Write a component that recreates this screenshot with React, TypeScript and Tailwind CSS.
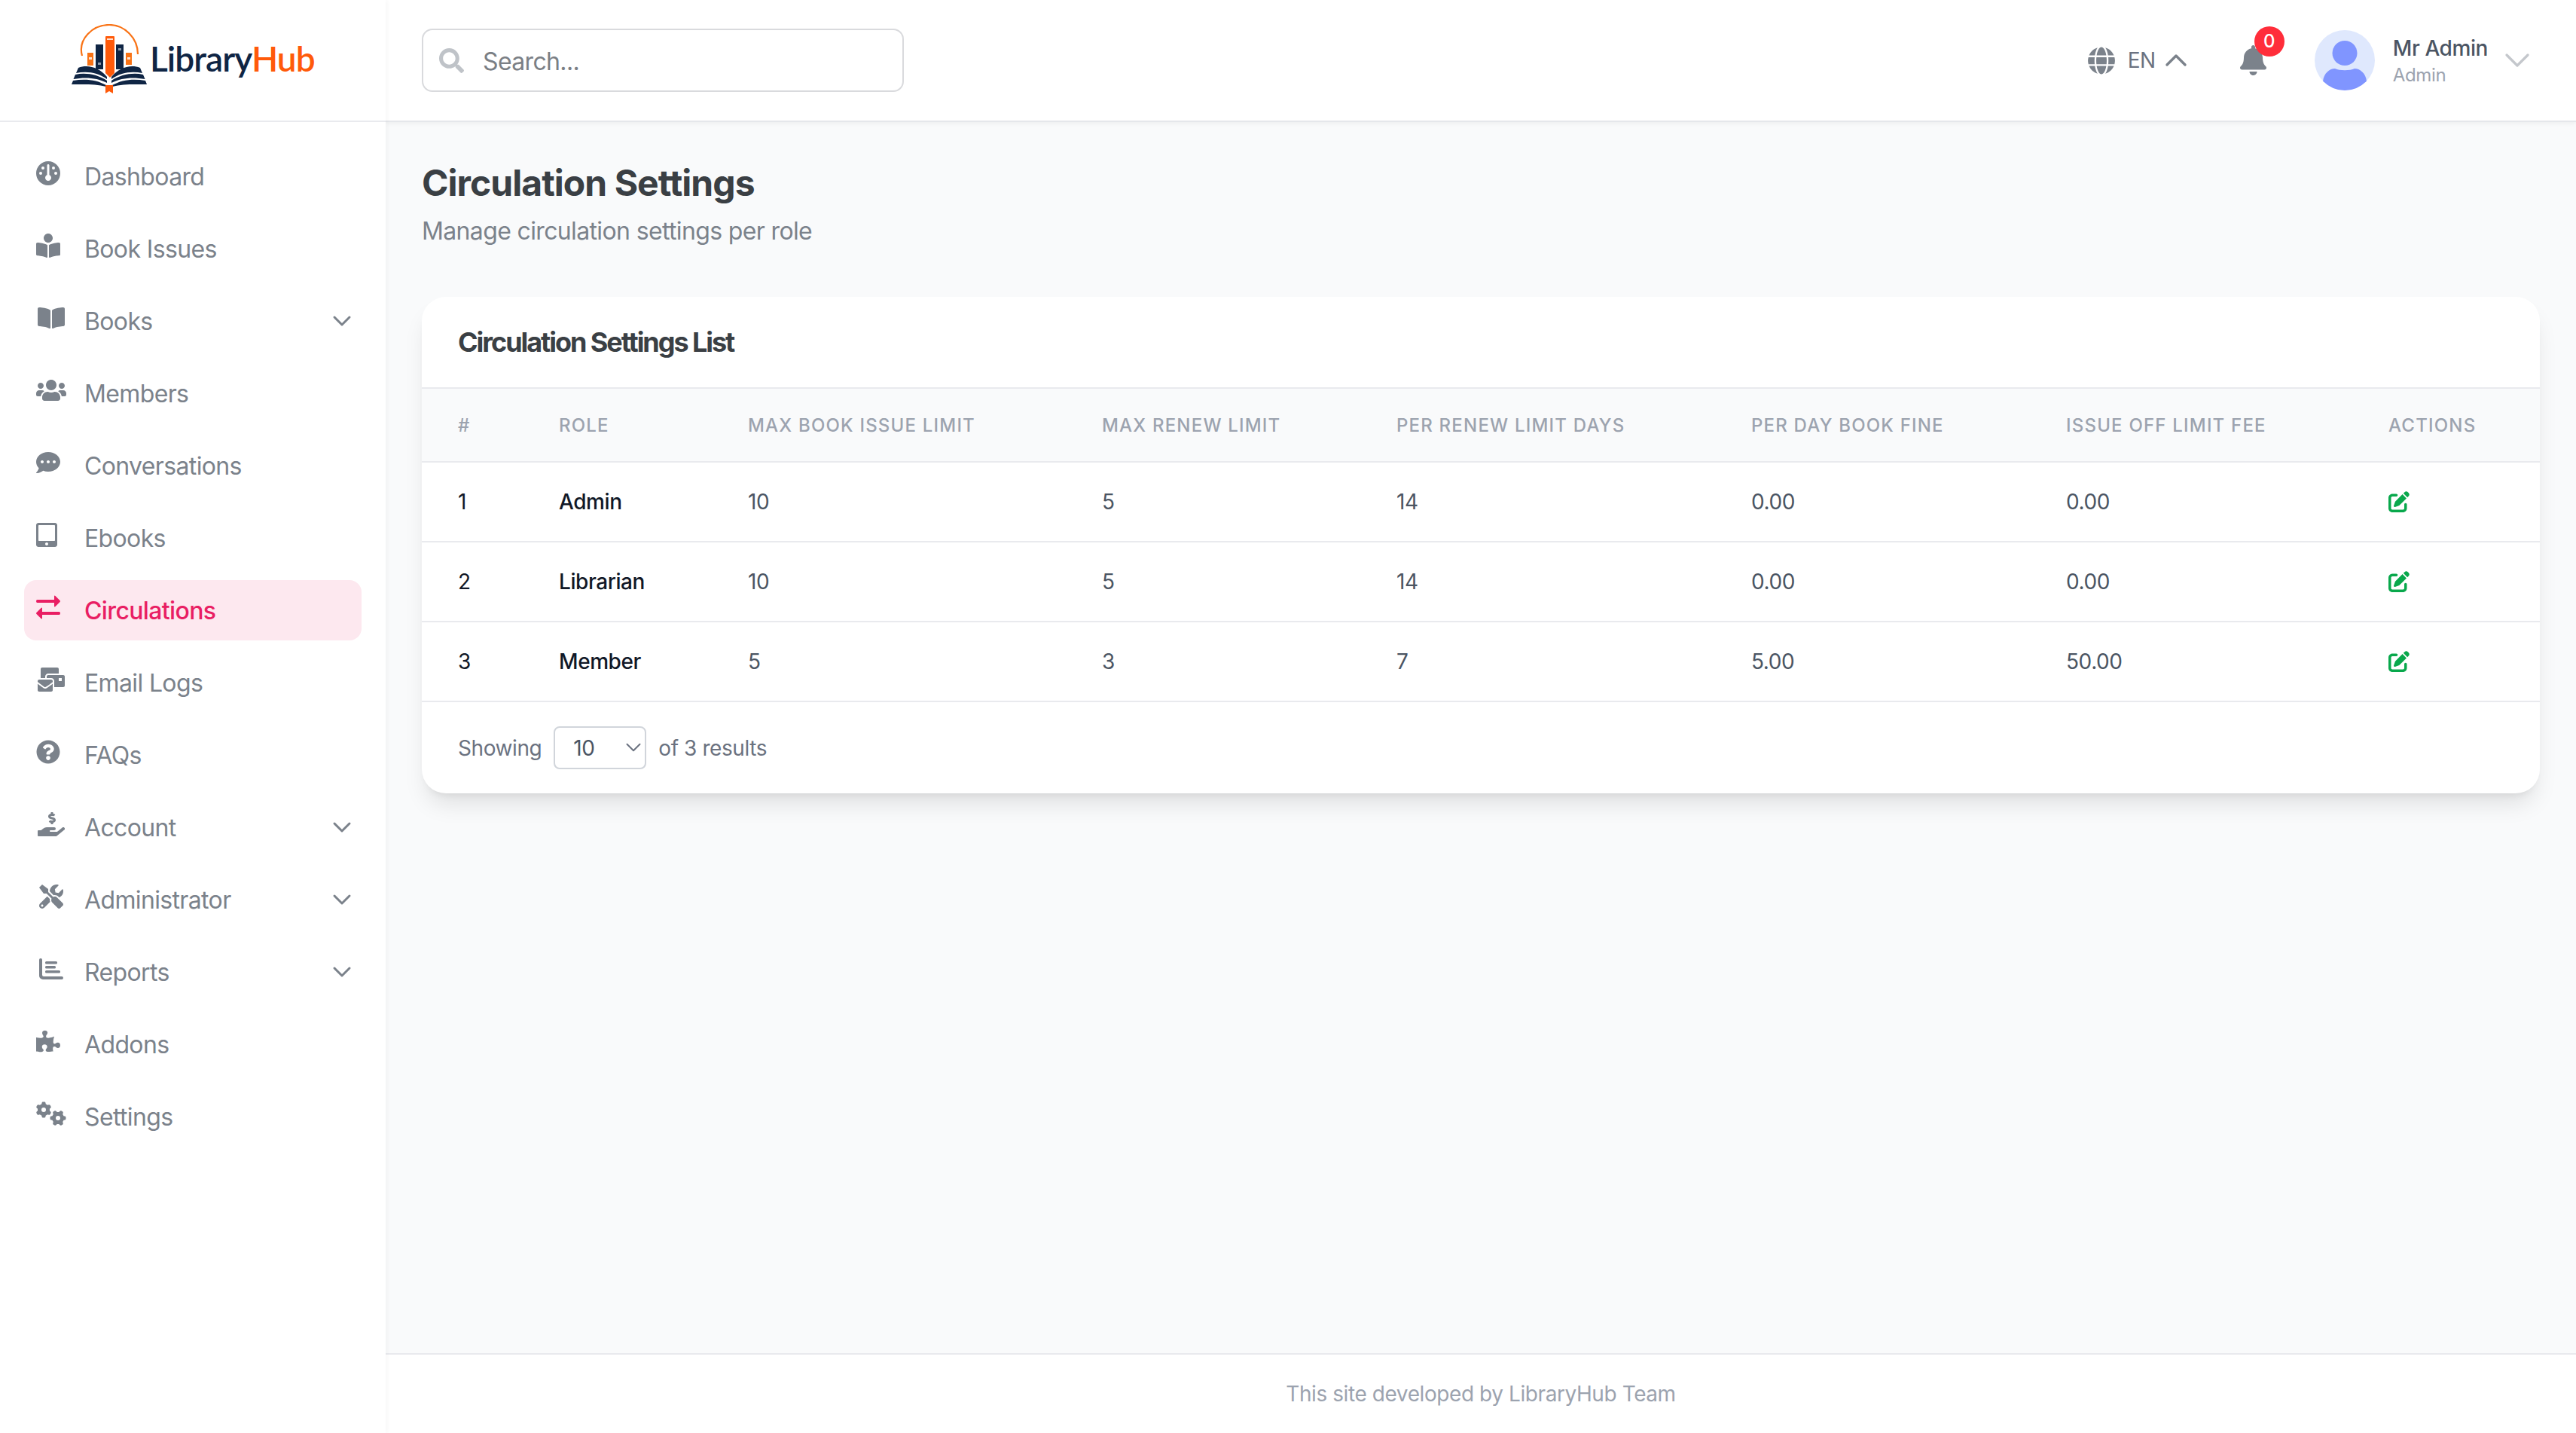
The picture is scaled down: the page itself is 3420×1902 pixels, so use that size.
import type { ReactNode } from "react";
import { ChevronDown, ChevronUp } from "lucide-react";
import {
  FaBell,
  FaBookOpen,
  FaBookReader,
  FaCommentDots,
  FaGlobe,
  FaHandHoldingUsd,
  FaMailBulk,
  FaPuzzlePiece,
  FaQuestionCircle,
  FaSearch,
  FaTabletAlt,
  FaTools,
  FaUsers,
} from "react-icons/fa";
import { FaGauge, FaGears, FaPenToSquare } from "react-icons/fa6";

interface NavItem {
  label: string;
  icon: ReactNode;
  active?: boolean;
  hasChildren?: boolean;
}

function ReportsIcon() {
  return (
    <svg viewBox="0 0 32 28" fill="currentColor" className="ml-1 h-7 w-8">
      <path d="M0 2a2 2 0 0 1 4 0v20a2 2 0 0 0 2 2h24a2 2 0 0 1 0 4H5a5 5 0 0 1-5-5Z" />
      <rect x="8" y="4" width="16" height="3.5" rx="1.5" />
      <rect x="8" y="10" width="14" height="3.5" rx="1.5" />
      <rect x="8" y="16" width="20" height="3.5" rx="1.5" />
    </svg>
  );
}

function SwapIcon() {
  return (
    <svg viewBox="0 0 32 32" fill="currentColor" className="h-8 w-8">
      <path d="M1.5 6H24V1.5Q24 0 25.5 1L31.5 7Q32.5 8 31.5 9L25.5 15Q24 16 24 14.5V10H1.5Q0 10 0 8T1.5 6Z" />
      <path d="M30.5 22H8V17.500Q8 16 6.500 17L.5 23Q-.5 24 .5 25L6.500 31Q8 32 8 30.500V26H30.500Q32 26 32 24T30.500 22Z" />
    </svg>
  );
}

const navItems: NavItem[] = [
  { label: "Dashboard", icon: <FaGauge className="h-8 w-8" /> },
  { label: "Book Issues", icon: <FaBookReader className="h-8 w-8" /> },
  { label: "Books", icon: <FaBookOpen className="ml-[2px] h-8 w-9" />, hasChildren: true },
  { label: "Members", icon: <FaUsers className="h-8 w-10" /> },
  { label: "Conversations", icon: <FaCommentDots className="h-8 w-8" /> },
  { label: "Ebooks", icon: <FaTabletAlt className="h-8 w-7" /> },
  { label: "Circulations", icon: <SwapIcon />, active: true },
  { label: "Email Logs", icon: <FaMailBulk className="ml-[2px] h-8 w-9" /> },
  { label: "FAQs", icon: <FaQuestionCircle className="h-8 w-8" /> },
  { label: "Account", icon: <FaHandHoldingUsd className="ml-[2px] h-8 w-9" />, hasChildren: true },
  { label: "Administrator", icon: <FaTools className="ml-1 h-8 w-8" />, hasChildren: true },
  { label: "Reports", icon: <ReportsIcon />, hasChildren: true },
  { label: "Addons", icon: <FaPuzzlePiece className="h-8 w-8" /> },
  { label: "Settings", icon: <FaGears className="h-8 w-10" /> },
];

const rows = [
  { id: 1, role: "Admin", issue: "10", renew: "5", days: "14", fine: "0.00", fee: "0.00" },
  { id: 2, role: "Librarian", issue: "10", renew: "5", days: "14", fine: "0.00", fee: "0.00" },
  { id: 3, role: "Member", issue: "5", renew: "3", days: "7", fine: "5.00", fee: "50.00" },
];

const thClass =
  "h-[98px] border-b-2 border-[#e9eaee] pt-[1px] pl-12 text-left text-[24px] font-medium uppercase tracking-[0.05em] text-[#9ca3af]";
const tdClass = "h-[106px] border-b-2 border-[#e9eaee] pl-12 text-[28px] tracking-[-0.015em] text-[#4b5563]";

function Logo() {
  return (
    <div className="flex items-center">
      <svg width="100" height="92" viewBox="0 0 100 92" className="shrink-0">
        <path d="M14 42C8 20 28 1 50 1C70 1 88 18 88 40" fill="none" stroke="#f97316" strokeWidth="2.2" />
        <rect x="21" y="38" width="8" height="17" fill="#f97316" />
        <rect x="72" y="38" width="8" height="16" fill="#f97316" />
        <rect x="32" y="27" width="10" height="33" fill="#0f2544" />
        <rect x="59" y="27" width="10" height="33" fill="#0f2544" />
        <path d="M45 17Q45 16 46 16H56Q57 16 57 17V65L51 71L45 65Z" fill="#ff5a0a" />
        <rect x="47" y="19" width="8" height="2" fill="#fde3d3" />
        <rect x="35" y="51" width="4" height="3" fill="#8a97a8" />
        <rect x="62" y="32" width="4" height="3" fill="#8a97a8" />
        <rect x="23" y="44" width="4" height="3" fill="#fde3d3" />
        <rect x="74" y="44" width="4" height="3" fill="#fde3d3" />
        <g fill="#0f2544">
          <path d="M9 58C22 53 37 58 47 70V73C35 64 20 62 6 65Z" />
          <path d="M5 67C19 64 35 67 47 75V78C34 71 18 70 2.5 73Z" />
          <path d="M2 75C18 72 34 74 46 81V83C32 79 14 80 0 80Z" />
        </g>
        <g fill="#0f2544" transform="matrix(-1 0 0 1 100 0)">
          <path d="M9 58C22 53 37 58 47 70V73C35 64 20 62 6 65Z" />
          <path d="M5 67C19 64 35 67 47 75V78C34 71 18 70 2.5 73Z" />
          <path d="M2 75C18 72 34 74 46 81V83C32 79 14 80 0 80Z" />
        </g>
        <path d="M45 81H55V92L50 89L45 92Z" fill="#ff5a0a" />
      </svg>
      <span className="ml-[4px] text-[46px] leading-none font-semibold tracking-[-0.02em] font-['Lato',sans-serif]">
        <span className="text-[#0f2544]">Library</span>
        <span className="text-[#ff5a0a]">Hub</span>
      </span>
    </div>
  );
}

function Sidebar() {
  return (
    <aside className="z-20 flex w-[512px] shrink-0 flex-col bg-white shadow-[2px_0_6px_rgba(0,0,0,0.04)]">
      <div className="flex h-[162px] items-center border-b-2 border-[#e9eaee] pb-[4px] pl-[95px]">
        <Logo />
      </div>
      <nav className="flex flex-col gap-4 px-8 pt-8">
        {navItems.map((item) => (
          <a
            key={item.label}
            className={`flex h-20 items-center rounded-2xl pr-[6px] pl-4 text-[32px] tracking-[-0.02em] ${
              item.active ? "bg-[#fde8ef] font-medium text-[#e91e63]" : "text-[#7b828b]"
            }`}
          >
            <span className="flex w-[64px] shrink-0 -translate-y-1">{item.icon}</span>
            <span className="flex-1 pt-[2px]">{item.label}</span>
            {item.hasChildren && <ChevronDown size={40} strokeWidth={1.8} />}
          </a>
        ))}
      </nav>
    </aside>
  );
}

function Avatar() {
  return (
    <div className="ml-16 size-20 shrink-0 overflow-hidden rounded-full bg-[#dfe8fd]">
      <svg width="80" height="80" viewBox="0 0 80 80">
        <circle cx="40" cy="30.5" r="16.5" fill="#8095ff" />
        <path d="M11 80V68C12 57 20 51 27 51C33 54 47 54 53 51C60 51 68 57 69 68V80Z" fill="#8095ff" />
      </svg>
    </div>
  );
}

function Topbar() {
  return (
    <header className="z-10 flex h-[162px] shrink-0 items-center justify-between border-b-2 border-[#e5e7eb] bg-white pr-[50px] pl-12 shadow-[0_2px_6px_rgba(0,0,0,0.05)]">
      <label className="flex h-[84px] w-[640px] items-center rounded-[14px] border-2 border-[#d9dadd] pl-[21px]">
        <FaSearch size={33} className="shrink-0 text-[#bfc3c8]" />
        <input
          placeholder="Search..."
          className="ml-[25px] w-full pt-[3px] text-[32px] tracking-[-0.02em] text-[#374151] outline-none placeholder:text-[#7b7f85]"
        />
      </label>
      <div className="flex items-center">
        <FaGlobe className="h-[37px] w-9 text-[#7b828b]" />
        <span className="ml-[17px] text-[28px] tracking-[-0.015em] text-[#6b7280]">EN</span>
        <ChevronUp size={48} strokeWidth={1.7} className="ml-[3px] text-[#7b828b]" />
        <div className="relative ml-[61px]">
          <FaBell className="h-10 w-[35px] text-[#7b828b]" />
          <span className="absolute top-[-25px] left-[19px] flex size-10 items-center justify-center rounded-full bg-[#ff2d3a] text-[24px] font-medium text-white">
            0
          </span>
        </div>
        <Avatar />
        <div className="ml-6 flex flex-col pt-[2px]">
          <span className="text-[28px] leading-[36px] font-medium tracking-[-0.015em] text-[#4b5563]">Mr Admin</span>
          <span className="mt-[2px] text-[24px] leading-[32px] tracking-[-0.015em] text-[#9ca3af]">Admin</span>
        </div>
        <ChevronDown size={56} strokeWidth={1.4} className="ml-[11px] text-[#c4c7cc]" />
      </div>
    </header>
  );
}

function SettingsTable() {
  return (
    <table className="w-full table-fixed border-separate border-spacing-0">
      <colgroup>
        <col className="w-[134px]" />
        <col className="w-[251px]" />
        <col className="w-[470px]" />
        <col className="w-[391px]" />
        <col className="w-[471px]" />
        <col className="w-[418px]" />
        <col className="w-[428px]" />
        <col className="w-[249px]" />
      </colgroup>
      <thead className="bg-[#f9fafb]">
        <tr>
          <th className={thClass}>#</th>
          <th className={thClass}>Role</th>
          <th className={thClass}>Max Book Issue Limit</th>
          <th className={thClass}>Max Renew Limit</th>
          <th className={thClass}>Per Renew Limit Days</th>
          <th className={thClass}>Per Day Book Fine</th>
          <th className={thClass}>Issue Off Limit Fee</th>
          <th className={thClass}>Actions</th>
        </tr>
      </thead>
      <tbody>
        {rows.map((row) => (
          <tr key={row.id}>
            <td className={`${tdClass} !text-[#111827]`}>{row.id}</td>
            <td className={`${tdClass} font-medium !text-[#111827]`}>{row.role}</td>
            <td className={tdClass}>{row.issue}</td>
            <td className={tdClass}>{row.renew}</td>
            <td className={tdClass}>{row.days}</td>
            <td className={tdClass}>{row.fine}</td>
            <td className={tdClass}>{row.fee}</td>
            <td className={tdClass}>
              <FaPenToSquare size={28} className="text-[#09a84c]" />
            </td>
          </tr>
        ))}
      </tbody>
    </table>
  );
}

export default function App() {
  return (
    <div className="flex h-screen bg-[#f9fafb] font-['Inter',sans-serif]">
      <Sidebar />
      <div className="flex min-w-0 flex-1 flex-col">
        <Topbar />
        <main className="flex-1 pt-[49px] pr-12 pl-12">
          <h1 className="text-[48px] leading-[64px] font-bold tracking-[-0.02em] text-[#3a3f44]">
            Circulation Settings
          </h1>
          <p className="mt-2 text-[32px] leading-[48px] tracking-[-0.02em] text-[#7b828b]">
            Manage circulation settings per role
          </p>
          <section className="mt-[63px] overflow-hidden rounded-[32px] bg-white shadow-[0_20px_30px_-6px_rgba(0,0,0,0.1),0_8px_12px_-8px_rgba(0,0,0,0.1)]">
            <div className="flex h-[122px] items-center border-b-2 border-[#e9eaee] px-12">
              <h2 className="text-[36px] font-bold tracking-[-0.057em] text-[#3a3f44]">Circulation Settings List</h2>
            </div>
            <SettingsTable />
            <div className="flex h-[121px] items-center px-12 text-[28px] tracking-[-0.015em] text-[#6b7280]">
              <span>Showing</span>
              <div className="relative mr-4 ml-4">
                <select className="h-[57px] w-[123px] appearance-none rounded-lg border-2 border-[#d1d5db] bg-white pl-6 text-[#4b5563]">
                  <option>10</option>
                  <option>25</option>
                  <option>50</option>
                </select>
                <ChevronDown size={34} strokeWidth={1.4} className="pointer-events-none absolute top-[11px] right-0 text-[#6b7280]" />
              </div>
              <span>of 3 results</span>
            </div>
          </section>
        </main>
        <footer className="flex h-[106px] shrink-0 items-center justify-center border-t-2 border-[#e9eaee] bg-white text-[28px] tracking-[-0.015em] text-[#9ca3af]">
          This site developed by LibraryHub Team
        </footer>
      </div>
    </div>
  );
}
